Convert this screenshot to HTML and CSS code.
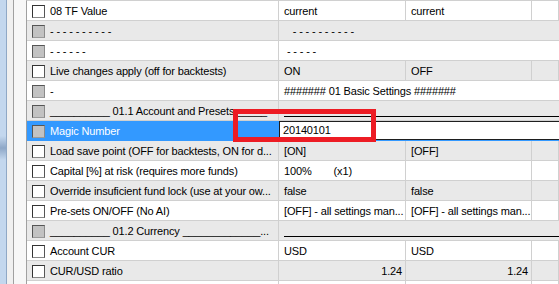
FILE: index.html
```html
<!DOCTYPE html>
<html lang="en">
<head>
    <meta charset="UTF-8">
    <title>Inputs</title>
    <link rel="stylesheet" href="styles.css">
</head>
<body>
    <div class="window">
        <div class="side">
            <div class="strip"></div>
            <div class="gutter"></div>
            <div class="margin"></div>
        </div>
        <div class="grid">
            <div class="row">
                <div class="name"><span class="check"></span>08 TF Value</div>
                <div class="val">current</div>
                <div class="val">current</div>
                <div class="val"></div>
            </div>
            <div class="row odd">
                <div class="name"><span class="check off"></span>- - - - - - - - - -</div>
                <div class="val wide">   - - - - - - - - - -</div>
            </div>
            <div class="row">
                <div class="name"><span class="check off"></span>- - - - - -</div>
                <div class="val wide"> - - - - -</div>
            </div>
            <div class="row odd">
                <div class="name"><span class="check"></span>Live changes apply (off for backtests)</div>
                <div class="val">ON</div>
                <div class="val">OFF</div>
                <div class="val"></div>
            </div>
            <div class="row">
                <div class="name"><span class="check off"></span>-</div>
                <div class="val wide">####### 01 Basic Settings #######</div>
            </div>
            <div class="row odd">
                <div class="name"><span class="check off"></span>__________ 01.1 Account and Presets _____</div>
                <div class="val wide"><div class="rule"></div></div>
            </div>
            <div class="row selected">
                <div class="name"><span class="check off"></span>Magic Number</div>
                <div class="val wide"><div class="edit">20140101</div></div>
            </div>
            <div class="row odd">
                <div class="name"><span class="check"></span>Load save point (OFF for backtests, ON for d...</div>
                <div class="val">[ON]</div>
                <div class="val">[OFF]</div>
                <div class="val"></div>
            </div>
            <div class="row">
                <div class="name"><span class="check"></span>Capital [%] at risk (requires more funds)</div>
                <div class="val">100%<span class="note">(x1)</span></div>
                <div class="val"></div>
                <div class="val"></div>
            </div>
            <div class="row odd">
                <div class="name"><span class="check"></span>Override insuficient fund lock (use at your ow...</div>
                <div class="val">false</div>
                <div class="val">false</div>
                <div class="val"></div>
            </div>
            <div class="row">
                <div class="name"><span class="check"></span>Pre-sets ON/OFF (No AI)</div>
                <div class="val">[OFF] - all settings man...</div>
                <div class="val">[OFF] - all settings man...</div>
                <div class="val"></div>
            </div>
            <div class="row odd">
                <div class="name"><span class="check off"></span>__________ 01.2 Currency _____________...</div>
                <div class="val wide"><div class="rule"></div></div>
            </div>
            <div class="row">
                <div class="name"><span class="check"></span>Account CUR</div>
                <div class="val">USD</div>
                <div class="val">USD</div>
                <div class="val"></div>
            </div>
            <div class="row odd">
                <div class="name"><span class="check"></span>CUR/USD ratio</div>
                <div class="val num">1.24</div>
                <div class="val num">1.24</div>
                <div class="val"></div>
            </div>
            <div class="row">
                <div class="name"></div>
                <div class="val"></div>
                <div class="val"></div>
                <div class="val"></div>
            </div>
        </div>
    </div>
    <div class="mark"></div>
</body>
</html>
```

FILE: styles.css
```css
body {
    margin: 0;
    font-family: "Liberation Sans", Arial, sans-serif;
    font-size: 11px;
    letter-spacing: -0.15px;
    color: #000;
    background: #fff;
    overflow: hidden;
}
.window {
    display: flex;
    height: 284px;
    overflow: hidden;
}
.side {
    display: flex;
    flex: none;
}
.strip {
    width: 6px;
    border-right: 1px solid #8fa8c6;
    background: linear-gradient(to bottom, #c3d7ee 0, #c3d7ee 136px, #8ea7c7 148px, #c3d7ee 160px, #c3d7ee 100%);
}
.gutter {
    width: 6px;
    background: #f0f0f0;
    border-right: 1px solid #a0a0a0;
}
.margin {
    width: 12px;
    background: #f7f7f7;
}
.grid {
    flex: 1;
    border-left: 1px solid #a0a0a0;
    border-top: 1px solid #d0d0d0;
    min-width: 0;
    overflow: hidden;
}
.row {
    display: grid;
    grid-template-columns: 252px 127px 126px 1fr;
    height: 20px;
    box-sizing: border-box;
    border-bottom: 1px solid #d0d0d0;
    background: #fff;
}
.row.odd {
    background: #e9e9e9;
}
.name, .val {
    box-sizing: border-box;
    border-right: 1px solid #d0d0d0;
    line-height: 20px;
    white-space: pre;
    overflow: hidden;
}
.name {
    display: flex;
    align-items: center;
    padding-left: 5px;
}
.val {
    padding-left: 5px;
}
.val.wide {
    grid-column: 2 / -1;
    border-right: none;
}
.val.num {
    text-align: right;
    padding-right: 3px;
}
.note {
    margin-left: 22px;
}
.check {
    flex: none;
    width: 13px;
    height: 13px;
    margin: 1px 5px 0 0;
    box-sizing: border-box;
    border: 1px solid #333;
    border-right-color: #555;
    border-bottom-color: #888;
    background: #fff;
}
.check.off {
    background: #c2c2c2;
    border-color: #555 #8a8a8a #9a9a9a #555;
}
.rule {
    margin: 15px 0 0 0;
    border-top: 1px solid #000;
}
.row.selected {
    background: #3399ff;
    border-bottom-color: #3399ff;
}
.row.selected .name {
    color: #fff;
    border-right-color: #3399ff;
}
.row.selected .val.wide {
    padding: 0;
}
.edit {
    height: 19px;
    box-sizing: border-box;
    border: 1px solid #1e1e1e;
    border-right: none;
    background: #fff;
    padding-left: 3px;
    line-height: 17px;
    color: #000;
}
.mark {
    position: absolute;
    left: 233px;
    top: 109px;
    width: 143px;
    height: 33px;
    box-sizing: border-box;
    border: 5px solid #ed1c24;
}
```
